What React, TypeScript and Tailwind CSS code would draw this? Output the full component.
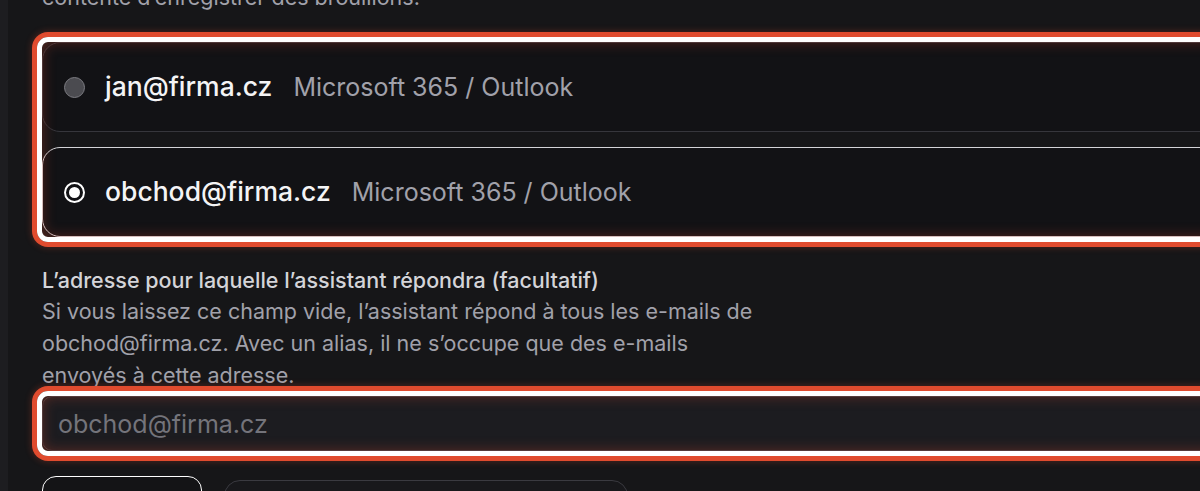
import React from 'react';

const accounts = [
  { email: 'jan@firma.cz', provider: 'Microsoft 365 / Outlook', selected: false },
  { email: 'obchod@firma.cz', provider: 'Microsoft 365 / Outlook', selected: true },
];

// spotlight ring drawn over highlighted parts of the form
function Spotlight() {
  return (
    <div className="pointer-events-none absolute -top-[5px] -left-[5px] -bottom-[5px] -right-[5px] rounded-[11px] border-[5px] border-white shadow-[0_0_0_5px_#e04b2e,0_0_6px_6px_rgba(224,75,46,0.25),inset_0_0_14px_rgba(224,75,46,0.35)]" />
  );
}

function Radio({ checked }: { checked: boolean }) {
  if (checked) {
    return (
      <span className="flex h-[21px] w-[21px] shrink-0 items-center justify-center rounded-full border-[2.5px] border-white bg-[#121215]">
        <span className="h-[11px] w-[11px] rounded-full bg-white" />
      </span>
    );
  }
  return <span className="h-[21px] w-[21px] shrink-0 rounded-full border-[1.5px] border-[#7c7c82] bg-[#4b4b50]" />;
}

export default function App() {
  return (
    <div className="flex h-[491px] w-full overflow-hidden bg-[#161618] font-[Inter,sans-serif]">
      <div className="w-[8px] shrink-0 bg-[#1d1d20]" />

      <div className="flex min-w-[1250px] flex-col pl-[34px]">
        <p className="-mt-[19px] text-[21.5px] leading-[32px] text-[#a1a1aa]">
          contente d’enregistrer des brouillons.
        </p>

        {/* Accounts */}
        <div className="relative mt-[29px] flex flex-col gap-[15px]">
          {accounts.map(a => (
            <div
              key={a.email}
              className={`flex h-[90px] items-center gap-[20px] rounded-[18px] border bg-[#121215] px-[21px] ${a.selected ? 'border-[#d4d4d8]' : 'border-[#36363c]'}`}
            >
              <Radio checked={a.selected} />
              <div className="flex items-baseline gap-[21px]">
                <span className="text-[26.5px] font-medium text-[#f4f4f5]">{a.email}</span>
                <span className="text-[25px] text-[#a1a1aa]">{a.provider}</span>
              </div>
            </div>
          ))}
          <Spotlight />
        </div>

        {/* Alias */}
        <div className="mt-[27px] text-[21.5px] leading-[32px]">
          <p className="mb-[-1px] font-medium text-[#d4d4d8]">L’adresse pour laquelle l’assistant répondra (facultatif)</p>
          <p className="text-[#a1a1aa]">
            Si vous laissez ce champ vide, l’assistant répond à tous les e-mails de
            <br />
            obchod@firma.cz. Avec un alias, il ne s’occupe que des e-mails
            <br />
            envoyés à cette adresse.
          </p>
        </div>

        <div className="relative mt-[5px]">
          <input
            type="text"
            placeholder="obchod@firma.cz"
            className="h-[55px] w-full rounded-[10px] border border-[#3a3a40] bg-[#1c1c20] px-[15px] text-[25px] text-white outline-none placeholder:text-[#74747b]"
          />
          <Spotlight />
        </div>

        {/* Actions */}
        <div className="mt-[25px] flex items-start gap-[22px]">
          <button className="h-[52px] w-[160px] rounded-[14px] border-[1.5px] border-white bg-[#141416]" />
          <button className="mt-[4px] h-[52px] w-[404px] rounded-[16px] border border-[#3a3a40] bg-[#18181b]" />
        </div>
      </div>
    </div>
  );
}
